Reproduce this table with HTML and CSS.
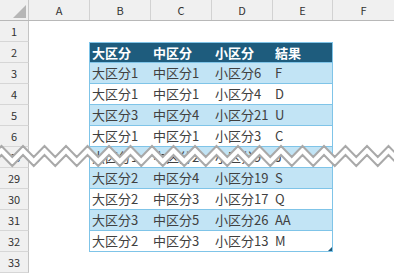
FILE: index.html
```html
<!DOCTYPE html>
<html lang="ja">
<head>
    <meta charset="UTF-8">
    <meta name="viewport" content="width=device-width, initial-scale=1.0">
    <title>区分一覧</title>
    <link rel="stylesheet" href="styles.css">
</head>
<body>
    <div class="sheet">
        <div class="colhead">
            <div class="corner"><span class="select-all"></span></div>
            <div class="ch ch-a">A</div>
            <div class="ch">B</div>
            <div class="ch">C</div>
            <div class="ch">D</div>
            <div class="ch ch-e">E</div>
            <div class="ch ch-f">F</div>
        </div>

        <div class="row"><div class="rh">1</div></div>

        <div class="row head">
            <div class="rh">2</div><div class="blank"></div>
            <div class="t tb">大区分</div><div class="t tc">中区分</div><div class="t td">小区分</div><div class="t te">結果</div>
        </div>
        <div class="row band">
            <div class="rh">3</div><div class="blank"></div>
            <div class="t tb">大区分1</div><div class="t tc">中区分1</div><div class="t td">小区分6</div><div class="t te">F</div>
        </div>
        <div class="row">
            <div class="rh">4</div><div class="blank"></div>
            <div class="t tb">大区分1</div><div class="t tc">中区分1</div><div class="t td">小区分4</div><div class="t te">D</div>
        </div>
        <div class="row band">
            <div class="rh">5</div><div class="blank"></div>
            <div class="t tb">大区分3</div><div class="t tc">中区分4</div><div class="t td">小区分21</div><div class="t te">U</div>
        </div>
        <div class="row">
            <div class="rh">6</div><div class="blank"></div>
            <div class="t tb">大区分1</div><div class="t tc">中区分1</div><div class="t td">小区分3</div><div class="t te">C</div>
        </div>

        <!-- rows 7..28 folded away -->
        <div class="fold-top">
            <div class="row band">
                <div class="rh">7</div><div class="blank"></div>
                <div class="t tb">大区分2</div><div class="t tc">中区分2</div><div class="t td">小区分8</div><div class="t te">H</div>
            </div>
        </div>
        <div class="fold-bottom">
            <div class="row">
                <div class="rh">28</div><div class="blank"></div>
                <div class="t tb">大区分1</div><div class="t tc">中区分2</div><div class="t td">小区分9</div><div class="t te">J</div>
            </div>
        </div>

        <div class="row band">
            <div class="rh">29</div><div class="blank"></div>
            <div class="t tb">大区分2</div><div class="t tc">中区分4</div><div class="t td">小区分19</div><div class="t te">S</div>
        </div>
        <div class="row">
            <div class="rh">30</div><div class="blank"></div>
            <div class="t tb">大区分2</div><div class="t tc">中区分3</div><div class="t td">小区分17</div><div class="t te">Q</div>
        </div>
        <div class="row band">
            <div class="rh">31</div><div class="blank"></div>
            <div class="t tb">大区分3</div><div class="t tc">中区分5</div><div class="t td">小区分26</div><div class="t te">AA</div>
        </div>
        <div class="row last">
            <div class="rh">32</div><div class="blank"></div>
            <div class="t tb">大区分2</div><div class="t tc">中区分3</div><div class="t td">小区分13</div><div class="t te">M</div>
        </div>
        <div class="row"><div class="rh">33</div></div>

        <!-- torn edge over the hidden rows -->
        <svg class="tear" width="394" height="30" viewBox="0 0 394 30">
            <path class="tear-fill" d="M-9.5,17 L1.5,6 L12.25,17 L23,6 L33.75,17 L44.5,6 L55.25,17 L66,6 L76.75,17 L87.5,6 L98.25,17 L109,6 L119.75,17 L130.5,6 L141.25,17 L152,6 L162.75,17 L173.5,6 L184.25,17 L195,6 L205.75,17 L216.5,6 L227.25,17 L238,6 L248.75,17 L259.5,6 L270.25,17 L281,6 L291.75,17 L302.5,6 L313.25,17 L324,6 L334.75,17 L345.5,6 L356.25,17 L367,6 L377.75,17 L388.5,6 L399.25,17 L410,6 L410,15 L399.25,26 L388.5,15 L377.75,26 L367,15 L356.25,26 L345.5,15 L334.75,26 L324,15 L313.25,26 L302.5,15 L291.75,26 L281,15 L270.25,26 L259.5,15 L248.75,26 L238,15 L227.25,26 L216.5,15 L205.75,26 L195,15 L184.25,26 L173.5,15 L162.75,26 L152,15 L141.25,26 L130.5,15 L119.75,26 L109,15 L98.25,26 L87.5,15 L76.75,26 L66,15 L55.25,26 L44.5,15 L33.75,26 L23,15 L12.25,26 L1.5,15 L-9.5,26 Z"/>
            <polyline class="tear-line" points="-9.5,17 1.5,6 12.25,17 23,6 33.75,17 44.5,6 55.25,17 66,6 76.75,17 87.5,6 98.25,17 109,6 119.75,17 130.5,6 141.25,17 152,6 162.75,17 173.5,6 184.25,17 195,6 205.75,17 216.5,6 227.25,17 238,6 248.75,17 259.5,6 270.25,17 281,6 291.75,17 302.5,6 313.25,17 324,6 334.75,17 345.5,6 356.25,17 367,6 377.75,17 388.5,6 399.25,17 410,6"/>
            <polyline class="tear-line" points="-9.5,26 1.5,15 12.25,26 23,15 33.75,26 44.5,15 55.25,26 66,15 76.75,26 87.5,15 98.25,26 109,15 119.75,26 130.5,15 141.25,26 152,15 162.75,26 173.5,15 184.25,26 195,15 205.75,26 216.5,15 227.25,26 238,15 248.75,26 259.5,15 270.25,26 281,15 291.75,26 302.5,15 313.25,26 324,15 334.75,26 345.5,15 356.25,26 367,15 377.75,26 388.5,15 399.25,26 410,15"/>
        </svg>
    </div>
</body>
</html>
```

FILE: styles.css
```css
* {
    box-sizing: border-box;
}
body {
    margin: 0;
    background: #fff;
    font-family: "Noto Sans CJK JP", "Noto Sans", sans-serif;
}
.sheet {
    position: relative;
    width: 394px;
    height: 275px;
    overflow: hidden;
}

/* column letters */
.colhead {
    display: flex;
    height: 21px;
    background: #f0f0f0;
    border-bottom: 1px solid #b8b8b8;
}
.corner {
    position: relative;
    width: 29px;
    border-right: 1px solid #c8c8c8;
}
.select-all {
    position: absolute;
    right: 2px;
    bottom: 2px;
    width: 0;
    height: 0;
    border-left: 13px solid transparent;
    border-bottom: 13px solid #b6b6b6;
}
.ch {
    width: 61px;
    border-right: 1px solid #d2d2d2;
    text-align: center;
    font-size: 11px;
    line-height: 20px;
    color: #333;
}
.ch-e {
    width: 60px;
}
.ch-f {
    flex: 1;
    border-right: none;
}

/* rows */
.row {
    display: flex;
    height: 21px;
}
.rh {
    width: 29px;
    flex-shrink: 0;
    background: #f0f0f0;
    border-right: 1px solid #c4c4c4;
    border-bottom: 1px solid #d6d6d6;
    text-align: center;
    font-size: 11px;
    line-height: 20px;
    color: #333;
}
.blank {
    width: 60px;
}

/* table cells */
.t {
    padding-left: 2px;
    font-size: 13px;
    line-height: 20px;
    color: #404040;
    white-space: nowrap;
    border-bottom: 1px solid #7fc4e8;
    background: #fff;
}
.tb {
    width: 62px;
    padding-left: 2px;
    border-left: 1px solid #7fc4e8;
}
.tc {
    width: 61px;
}
.td {
    width: 61px;
    padding-left: 3px;
}
.te {
    position: relative;
    width: 60px;
    border-right: 1px solid #7fc4e8;
}
.band .t {
    background: #c2e4f5;
}
.head .t {
    background: #1e5c7d;
    color: #fff;
    font-weight: bold;
    border-top: 1px solid #7fc4e8;
    line-height: 19px;
}
.last .te::after {
    content: "";
    position: absolute;
    right: 0;
    bottom: 0;
    width: 0;
    height: 0;
    border-left: 4px solid transparent;
    border-bottom: 4px solid #1e5c7d;
}

/* folded rows */
.fold-top {
    height: 10px;
    overflow: hidden;
}
.fold-bottom {
    height: 11px;
    overflow: hidden;
}
.fold-bottom .row {
    margin-top: -10px;
}
.tear {
    position: absolute;
    left: 0;
    top: 140px;
}
.tear-fill {
    fill: #fff;
}
.tear-line {
    fill: none;
    stroke: #a9a9a9;
    stroke-width: 2;
}
```
